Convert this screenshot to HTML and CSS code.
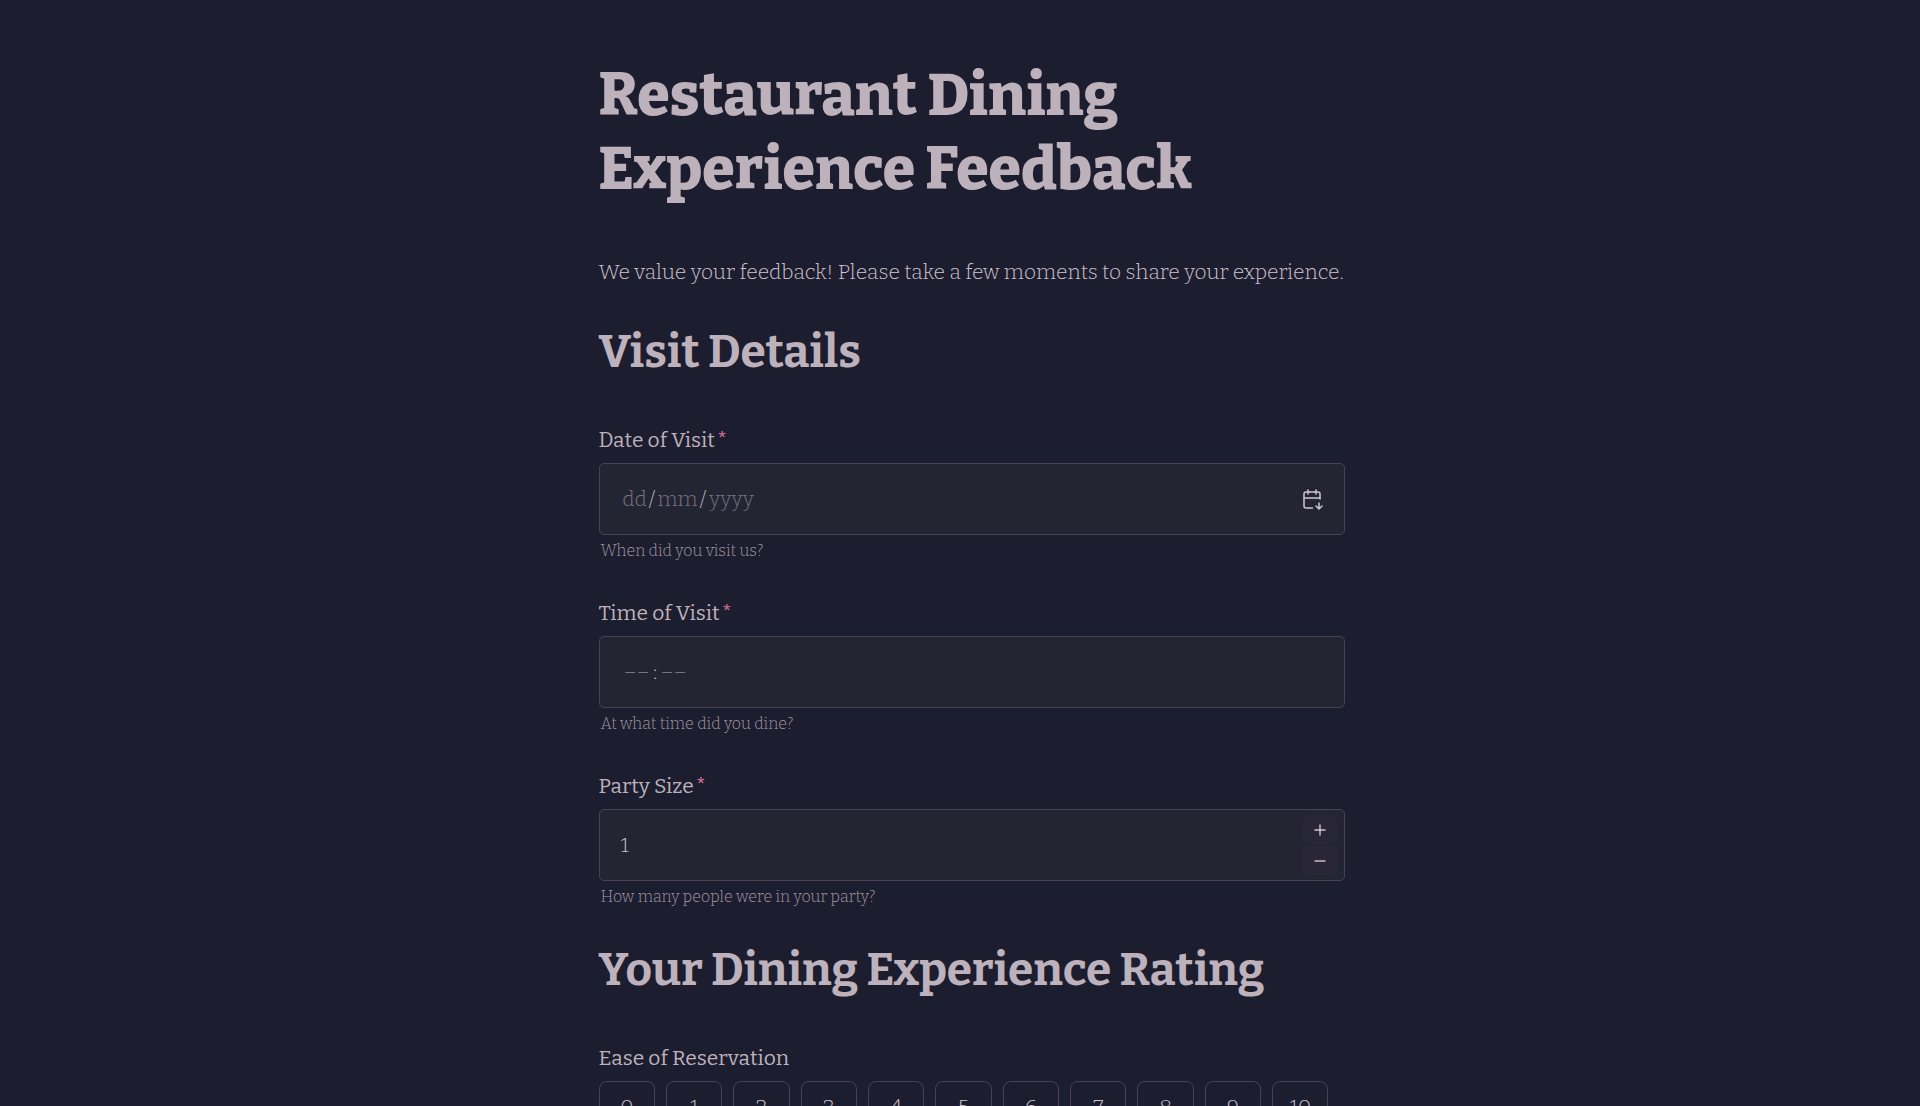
FILE: index.html
```html
<!DOCTYPE html>
<html lang="en">
<head>
<meta charset="utf-8">
<meta name="viewport" content="width=device-width, initial-scale=1">
<title>Restaurant Dining Experience Feedback</title>
<link rel="stylesheet" href="styles.css">
</head>
<body>
<main class="page">
<form class="form">
  <h1 class="title">Restaurant Dining<br>Experience Feedback</h1>
  <p class="intro">We value your feedback! Please take a few moments to share your experience.</p>

  <h2 class="section">Visit Details</h2>

  <div class="field">
    <label class="label" for="day">Date of Visit<span class="required">*</span></label>
    <div class="control">
      <div class="segments">
        <input class="segment day" id="day" inputmode="numeric" maxlength="2" placeholder="dd" aria-label="Day of visit">
        <span class="slash">/</span>
        <input class="segment month" inputmode="numeric" maxlength="2" placeholder="mm" aria-label="Month of visit">
        <span class="slash">/</span>
        <input class="segment year" inputmode="numeric" maxlength="4" placeholder="yyyy" aria-label="Year of visit">
      </div>
      <button class="calendar" type="button" aria-label="Open calendar">
        <svg width="24" height="24" viewBox="0 0 24 24" fill="none" stroke="currentColor" stroke-width="1.5" stroke-linecap="round" stroke-linejoin="round">
          <path d="M12.5 21H6a2 2 0 0 1-2-2V7a2 2 0 0 1 2-2h12a2 2 0 0 1 2 2v5"/>
          <path d="M16 3v4M8 3v4M4 11h16M19 16v6M22 19l-3 3-3-3"/>
        </svg>
      </button>
    </div>
    <p class="hint">When did you visit us?</p>
  </div>

  <div class="field">
    <label class="label" for="hour">Time of Visit<span class="required">*</span></label>
    <div class="control">
      <div class="segments time">
        <input class="segment clock" id="hour" inputmode="numeric" maxlength="2" placeholder="––" aria-label="Hour of visit">
        <span class="colon">:</span>
        <input class="segment clock" inputmode="numeric" maxlength="2" placeholder="––" aria-label="Minute of visit">
      </div>
    </div>
    <p class="hint">At what time did you dine?</p>
  </div>

  <div class="field">
    <label class="label" for="party">Party Size<span class="required">*</span></label>
    <div class="control number">
      <input class="amount" id="party" type="number" min="1" value="1">
      <div class="stepper">
        <button class="step" type="button" aria-label="Increase"><svg width="12" height="12" viewBox="0 0 12 12" stroke="currentColor" stroke-width="1.4"><path d="M6 .5v11M.5 6h11"/></svg></button>
        <button class="step" type="button" aria-label="Decrease"><svg width="12" height="12" viewBox="0 0 12 12" stroke="currentColor" stroke-width="1.4"><path d="M.5 6h11"/></svg></button>
      </div>
    </div>
    <p class="hint">How many people were in your party?</p>
  </div>

  <h2 class="section">Your Dining Experience Rating</h2>

  <fieldset class="rating">
    <legend class="label">Ease of Reservation</legend>
    <div class="scale">
      <label class="score"><input type="radio" name="reservation" value="0">0</label>
      <label class="score"><input type="radio" name="reservation" value="1">1</label>
      <label class="score"><input type="radio" name="reservation" value="2">2</label>
      <label class="score"><input type="radio" name="reservation" value="3">3</label>
      <label class="score"><input type="radio" name="reservation" value="4">4</label>
      <label class="score"><input type="radio" name="reservation" value="5">5</label>
      <label class="score"><input type="radio" name="reservation" value="6">6</label>
      <label class="score"><input type="radio" name="reservation" value="7">7</label>
      <label class="score"><input type="radio" name="reservation" value="8">8</label>
      <label class="score"><input type="radio" name="reservation" value="9">9</label>
      <label class="score"><input type="radio" name="reservation" value="10">10</label>
    </div>
  </fieldset>
</form>
</main>
</body>
</html>
```
FILE: styles.css
```css
:root {
  --bg: #1c1d2e;
  --surface: #242533;
  --line: #4a4251;
  --text: #bdb1bb;
  --text-light: #d0c5cf;
  --muted: #a39ba6;
  --faint: #7c7482;
  --accent: #ee7dab;
}

* { box-sizing: border-box; }

html { scrollbar-width: none; }

body {
  margin: 0;
  background: var(--bg);
  color: var(--text);
  font-family: Bitter, "DejaVu Serif Condensed", "DejaVu Serif", serif;
  font-size: 21px;
  font-weight: 300;
  line-height: 32px;
}

input, button { font: inherit; color: inherit; }

.page {
  display: flex;
  justify-content: center;
  padding: 59px 0 48px 23px;
}

.form {
  width: 100%;
  max-width: 746px;
}

.title {
  margin: 0;
  font-size: 59px;
  line-height: 74px;
  font-weight: 800;
}

.intro {
  margin: 49px 0 36px;
  color: var(--text-light);
}

.section {
  margin: 33px 0 0;
  font-size: 46px;
  line-height: 56px;
  font-weight: 700;
}

.section + .field, .section + .rating { margin-top: 44px; }

.field { margin-top: 34px; }

.label {
  display: block;
  padding: 0;
  font-size: 21px;
  line-height: 32px;
  font-weight: 400;
}

.required {
  margin-left: 2px;
  color: var(--accent);
}

.control {
  display: flex;
  align-items: center;
  justify-content: space-between;
  height: 72px;
  margin-top: 7px;
  padding: 0 20px 0 21px;
  border: 1px solid var(--line);
  border-radius: 5px;
  background: var(--surface);
  color: var(--text-light);
}

.segments {
  display: flex;
  align-items: center;
  padding-left: 1px;
}

.segment {
  padding: 0;
  border: 0;
  outline: 0;
  background: none;
  text-align: center;
}

.segment::placeholder { color: var(--faint); opacity: 1; }

.day { width: 26px; }
.month { width: 42px; }
.year { width: 48px; }
.clock { width: 28px; }
.slash, .colon { width: 9px; text-align: center; }

.time { padding-left: 2px; }

.calendar {
  display: flex;
  padding: 0;
  border: 0;
  background: none;
}

.hint {
  margin: 0;
  padding: 4px 0 0 2px;
  color: var(--muted);
  font-size: 16px;
  line-height: 24px;
}

.number { padding-right: 7px; }

.amount {
  flex: 1;
  min-width: 0;
  padding: 0;
  border: 0;
  outline: 0;
  background: none;
  appearance: textfield;
}

.amount::-webkit-inner-spin-button { appearance: none; }

.stepper {
  display: grid;
  gap: 2px;
}

.step {
  display: flex;
  align-items: center;
  justify-content: center;
  width: 34px;
  height: 29px;
  padding: 0;
  border: 0;
  border-radius: 5px;
  background: #292737;
}

.rating {
  min-width: 0;
  margin: 0;
  padding: 0;
  border: 0;
}

.scale {
  display: grid;
  grid-template-columns: repeat(11, 1fr);
  gap: 11px;
  padding: 7px 16px 0 0;
}

.score {
  display: flex;
  align-items: center;
  justify-content: center;
  height: 52px;
  border: 1px solid var(--line);
  border-radius: 8px;
  color: var(--text-light);
}

.score input {
  appearance: none;
  width: 0;
  margin: 0;
}
```
